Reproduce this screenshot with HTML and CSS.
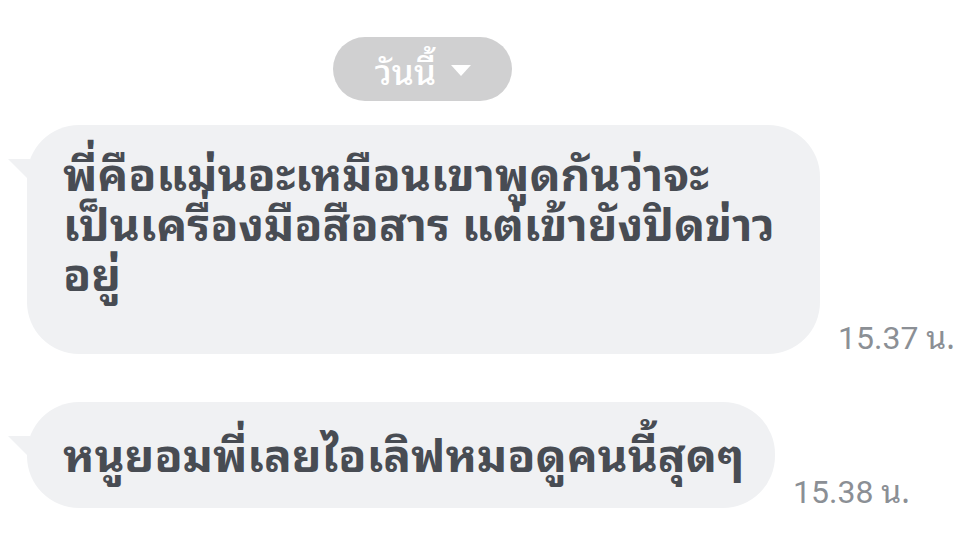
FILE: index.html
```html
<!DOCTYPE html>
<html lang="th">
<head>
<meta charset="utf-8">
<link rel="stylesheet" href="styles.css">
</head>
<body>
<div class="chat">
  <div class="date-row">
    <div class="date-pill"><span>วันนี้</span><svg class="caret" width="22" height="13" viewBox="0 0 22 13"><path d="M1 1 H21 L11 12 Z" fill="#ffffff"/></svg></div>
  </div>
  <div class="msg msg-1">
    <div class="bubble b1">
      <div class="text">พี่คือแม่นอะเหมือนเขาพูดกันว่าจะ<br>เป็นเครื่องมือสือสาร แต่เข้ายังปิดข่าว<br>อยู่</div>
    </div>
    <div class="time">15.37 <span class="th">น.</span></div>
  </div>
  <div class="msg msg-2">
    <div class="bubble b2">
      <div class="text">หนูยอมพี่เลยไอเลิฟหมอดูคนนี้สุดๆ</div>
    </div>
    <div class="time">15.38 <span class="th">น.</span></div>
  </div>
</div>
</body>
</html>
```
FILE: styles.css
```css
html, body {
  margin: 0;
  padding: 0;
  background: #ffffff;
}
body {
  width: 958px;
  height: 549px;
  overflow: hidden;
  font-family: "Noto Sans Thai Looped", Roboto, sans-serif;
}
.chat {
  display: flex;
  flex-direction: column;
  padding-top: 37px;
}
.date-row {
  display: flex;
  justify-content: flex-start;
  padding-left: 333px;
}
.date-pill {
  width: 179px;
  height: 64px;
  border-radius: 32px;
  background: #d0d0d1;
  color: #ffffff;
  display: flex;
  align-items: center;
  justify-content: center;
  gap: 14px;
  font-size: 35px;
  font-weight: 500;
  box-sizing: border-box;
  padding-left: 2px;
}
.caret {
  margin-top: 2px;
}
.msg {
  display: flex;
  align-items: flex-end;
  padding-left: 27px;
}
.msg-1 {
  margin-top: 24px;
}
.msg-2 {
  margin-top: 48px;
}
.bubble {
  position: relative;
  background: #f0f1f3;
  border-radius: 52px;
  box-sizing: border-box;
  color: #484c53;
  font-weight: 700;
  font-size: 46px;
  line-height: 50px;
  padding-left: 36px;
}
.bubble::before {
  content: "";
  position: absolute;
  left: -19px;
  top: 34px;
  width: 0;
  height: 0;
  border-right: 22px solid #f0f1f3;
  border-bottom: 22px solid transparent;
}
.b1 {
  width: 793px;
  height: 229px;
  padding-top: 20px;
}
.b2 {
  width: 748px;
  height: 106px;
  padding-top: 24px;
}
.text {
  white-space: nowrap;
}
.time {
  font-family: Roboto, sans-serif;
  font-size: 32px;
  color: #8b8f95;
  padding-left: 18px;
  line-height: 32px;
  white-space: nowrap;
}
.th {
  font-family: "Noto Sans Thai Looped", sans-serif;
}
```
